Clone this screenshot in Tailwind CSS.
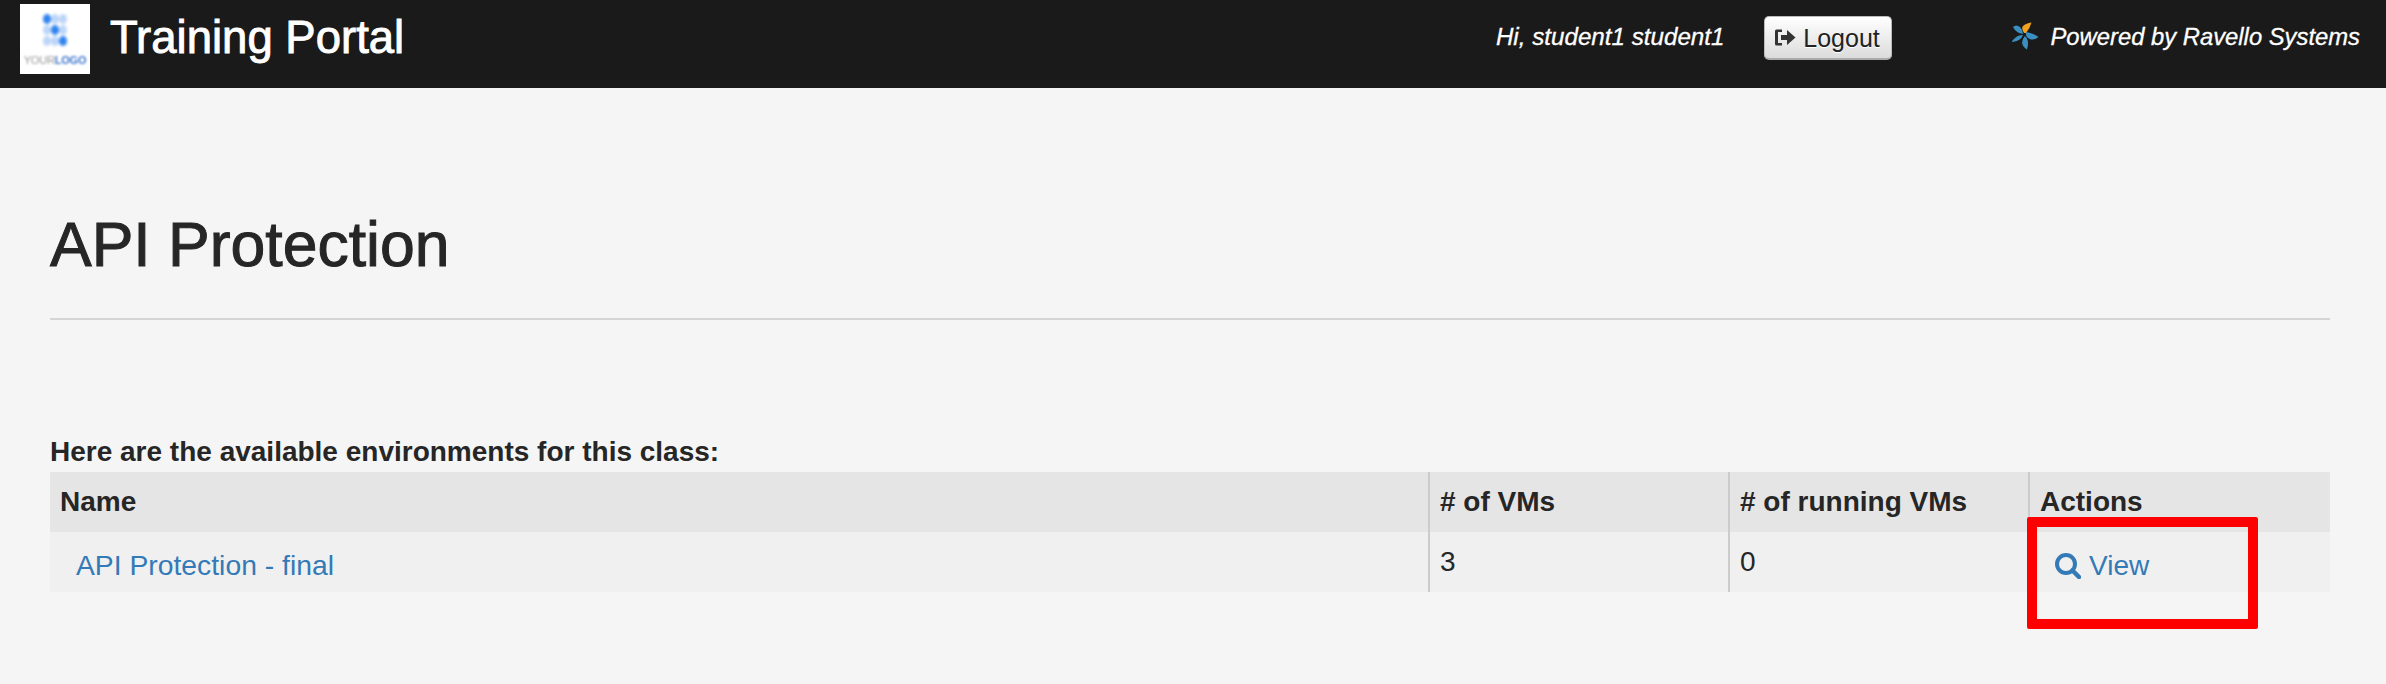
<!DOCTYPE html>
<html lang="en">
<head>
    <meta charset="UTF-8">
    <title>Training Portal</title>
    <script src="https://cdn.jsdelivr.net/npm/@tailwindcss/browser@4"></script>
</head>
<body class="bg-[#f5f5f5] text-[#262626] font-['Liberation_Sans',Arial,sans-serif] min-h-screen overflow-hidden">
    <!-- top bar -->
    <nav class="h-[88px] bg-[#1a1a1a] flex text-white">
        <div class="ml-5 mt-1 w-[70px] h-[70px] bg-white flex flex-col items-center overflow-hidden">
            <svg class="mt-[9px] blur-[1.500px]" width="24" height="34" viewBox="0 0 24 34">
                <g fill="#bcd5f8">
                    <ellipse cx="4" cy="6" rx="4" ry="5" fill="#2f83ee"/><ellipse cx="12" cy="6" rx="4" ry="5"/><ellipse cx="20" cy="6" rx="4" ry="5"/>
                    <ellipse cx="4" cy="17" rx="4" ry="5"/><ellipse cx="12" cy="17" rx="4" ry="5" fill="#2f83ee"/><ellipse cx="20" cy="17" rx="4" ry="5"/>
                    <ellipse cx="4" cy="28" rx="4" ry="5"/><ellipse cx="12" cy="28" rx="4" ry="5"/><ellipse cx="20" cy="28" rx="4" ry="5" fill="#2f83ee"/>
                </g>
            </svg>
            <div class="mt-[6px] text-[11px] leading-[14px] tracking-[-0.2px] blur-[1px] whitespace-nowrap text-[#999]">YOUR<span class="font-bold text-[#3f76cc]">LOGO</span></div>
        </div>
        <div class="ml-5 mt-[11px] text-[45.500px] leading-[54px] [-webkit-text-stroke:0.9px_white]">Training Portal</div>
        <div class="ml-auto mt-[24px] text-[24.200px] leading-[26px] italic [-webkit-text-stroke:0.3px_white]">Hi, student1 student1</div>
        <button class="ml-[39px] mt-4 w-[128px] h-[44px] rounded-[5px] border border-[#bbb] border-b-2 border-b-[#aaa] bg-gradient-to-b from-white to-[#dcdcdc] text-[#222] text-[25px] leading-[40px] [text-shadow:0_1px_0_white] flex items-center justify-center gap-[7px]">
            <svg width="21" height="17" viewBox="0 0 21 17" fill="#333">
                <path d="M0 2Q0 0.500 1.500 0.500H7V3H3V14H7V16.500H1.500Q0 16.500 0 15Z"/>
                <path d="M6 6H12V1L20.500 8.500L12 16V11H6Z"/>
            </svg>
            <span>Logout</span>
        </button>
        <svg class="ml-[119px] mt-[22px]" width="28" height="28" viewBox="20 12 28 28">
            <path d="M33 23Q30 18 32 16Q35 13 40.500 12.500Q39 18 35 23Z" fill="#f0a11f"/>
            <g fill="#3a8fc0">
                <path d="M32 24Q25 23 22 17Q25 14 29 17Q32 20 32 24Z"/>
                <path d="M35 22Q42 23 47.500 27Q44 30 40 29.500Q36 28 35 25Z"/>
                <path d="M34 26Q39 30 36 39.500Q32 37 31 33Q31 29 34 26Z"/>
                <path d="M32 25Q30 31 21 32Q20.500 31 24 28Q27 25 32 25Z"/>
            </g>
        </svg>
        <div class="ml-[12px] mr-[26px] mt-[24px] text-[23.800px] leading-[26px] italic [-webkit-text-stroke:0.3px_white]">Powered by Ravello Systems</div>
    </nav>

    <main class="relative pl-[50px] pr-[56px]">
        <h1 class="pt-[121px] text-[62.500px] leading-[70px] pb-[39px] border-b-2 border-[#d5d5d5] [-webkit-text-stroke:1px_#262626]">API Protection</h1>
        <p class="mt-[116px] text-[28px] leading-[32px] font-bold">Here are the available environments for this class:</p>
        <table class="w-full table-fixed text-[28px] leading-[32px] mt-[4px] border-collapse">
            <thead class="bg-[#e5e5e5] font-bold text-left">
                <tr class="h-[60px]">
                    <th class="pl-[10px]">Name</th>
                    <th class="w-[300px] pl-[10px] border-l-2 border-[#ccc]"># of VMs</th>
                    <th class="w-[300px] pl-[10px] border-l-2 border-[#ccc]"># of running VMs</th>
                    <th class="w-[301px] pl-[10px] border-l-2 border-[#ccc]">Actions</th>
                </tr>
            </thead>
            <tbody class="bg-[#f0f0f0]">
                <tr class="h-[60px]">
                    <td class="pl-[26px] pt-[6px] text-[28.300px] text-[#337ab7]">API Protection - final</td>
                    <td class="pl-[10px] pb-[1px] border-l-2 border-[#ccc]">3</td>
                    <td class="pl-[10px] pb-[1px] border-l-2 border-[#ccc]">0</td>
                    <td class="pl-[26px] pt-[6px] text-[#337ab7]">
                        <span class="inline-flex items-center gap-[8px] translate-y-[3px]">
                            <svg width="26" height="26" viewBox="0 0 26 26" fill="none" stroke="#337ab7">
                                <circle cx="11" cy="11" r="9" stroke-width="4"/>
                                <path d="M17.500 17.500L24 24" stroke-width="4.500" stroke-linecap="round"/>
                            </svg>
                            View
                        </span>
                    </td>
                </tr>
            </tbody>
        </table>
        <!-- red callout drawn over the screenshot -->
        <div class="absolute left-[2027px] top-[429px] w-[231px] h-[112px] border-[10px] border-[#ff0000] rounded-[2px]"></div>
    </main>
</body>
</html>
